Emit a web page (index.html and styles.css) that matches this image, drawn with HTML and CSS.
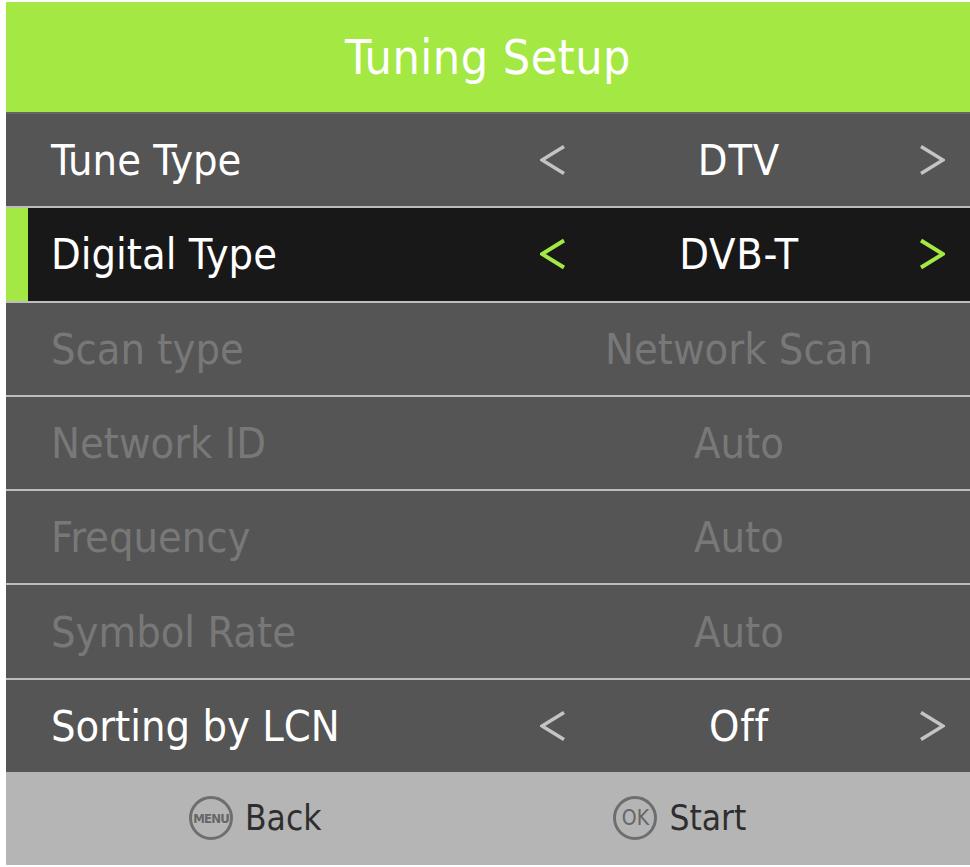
FILE: index.html
```html
<!DOCTYPE html>
<html lang="en">
<head>
<meta charset="utf-8">
<title>Tuning Setup</title>
<link rel="stylesheet" href="styles.css">
</head>
<body>
<main class="panel">
  <header class="title">Tuning Setup</header>
  <div class="row first">
    <span class="label">Tune Type</span>
    <div class="control">
      <svg class="arrow" viewBox="0 0 26 32"><path d="M24 2.5 2 16l22 13.5"/></svg>
      <span class="value">DTV</span>
      <svg class="arrow" viewBox="0 0 26 32"><path d="M2 2.5 24 16 2 29.5"/></svg>
    </div>
  </div>
  <div class="row selected">
    <span class="label">Digital Type</span>
    <div class="control">
      <svg class="arrow" viewBox="0 0 26 32"><path d="M24 2.5 2 16l22 13.5"/></svg>
      <span class="value">DVB-T</span>
      <svg class="arrow" viewBox="0 0 26 32"><path d="M2 2.5 24 16 2 29.5"/></svg>
    </div>
  </div>
  <div class="row disabled">
    <span class="label">Scan type</span>
    <div class="control"><span class="value">Network Scan</span></div>
  </div>
  <div class="row disabled">
    <span class="label">Network ID</span>
    <div class="control"><span class="value">Auto</span></div>
  </div>
  <div class="row disabled">
    <span class="label">Frequency</span>
    <div class="control"><span class="value">Auto</span></div>
  </div>
  <div class="row disabled">
    <span class="label">Symbol Rate</span>
    <div class="control"><span class="value">Auto</span></div>
  </div>
  <div class="row">
    <span class="label">Sorting by LCN</span>
    <div class="control">
      <svg class="arrow" viewBox="0 0 26 32"><path d="M24 2.5 2 16l22 13.5"/></svg>
      <span class="value">Off</span>
      <svg class="arrow" viewBox="0 0 26 32"><path d="M2 2.5 24 16 2 29.5"/></svg>
    </div>
  </div>
  <footer class="footer">
    <div class="hint back">
      <span class="badge badge-menu">MENU</span>
      <span>Back</span>
    </div>
    <div class="hint start">
      <span class="badge badge-ok">OK</span>
      <span>Start</span>
    </div>
  </footer>
</main>
</body>
</html>
```
FILE: styles.css
```css
html, body { margin: 0; padding: 0; background: #fff; }
body { padding: 2px 0 2px 6px; width: 964px; overflow: hidden; }
.panel {
  width: 964px;
  height: 863px;
  display: flex;
  flex-direction: column;
  background: #555;
  font-family: "DejaVu Sans Condensed", "DejaVu Sans", sans-serif;
  font-stretch: condensed;
  font-variant-ligatures: none;
  color: #fff;
}
.title {
  height: 110px;
  flex: none;
  background: #a4e843;
  display: flex;
  align-items: center;
  justify-content: center;
  font-size: 48px;
  letter-spacing: 0.5px;
}
.row {
  flex: 1;
  min-height: 0;
  box-sizing: border-box;
  display: flex;
  align-items: center;
  padding-left: 45px;
  border-top: 2px solid #bdbdbd;
  font-size: 43px;
  background: #555;
}
.row.first { border-top-color: #666; }
.row.selected {
  background: #181818;
  box-shadow: inset 22px 0 0 #a4e843;
}
.row.disabled { color: #787878; }
.control {
  margin-left: auto;
  width: 430px;
  box-sizing: border-box;
  padding-right: 25px;
  display: flex;
  align-items: center;
}
.disabled .control { padding-right: 32px; }
.value { flex: 1; text-align: center; }
.arrow + .value { margin-right: 7px; letter-spacing: 0.8px; }
.arrow {
  width: 26px;
  height: 32px;
  flex: none;
  fill: none;
  stroke: #c4c4c4;
  stroke-width: 3.5;
}
.selected .arrow { stroke: #a4e843; stroke-width: 4; }
.footer {
  height: 93px;
  flex: none;
  background: #b5b5b5;
  color: #2e2e2e;
  display: flex;
  align-items: center;
  font-size: 35px;
}
.hint { display: flex; align-items: center; gap: 12px; }
.back { margin-left: 183px; }
.start { margin-left: 292px; }
.badge {
  width: 44px;
  height: 44px;
  box-sizing: border-box;
  border: 3px solid #6e6e6e;
  border-radius: 50%;
  display: flex;
  align-items: center;
  justify-content: center;
  color: #666;
}
.badge-menu { font-size: 13px; font-weight: bold; letter-spacing: -0.8px; }
.badge-ok { font-size: 21px; }
```
